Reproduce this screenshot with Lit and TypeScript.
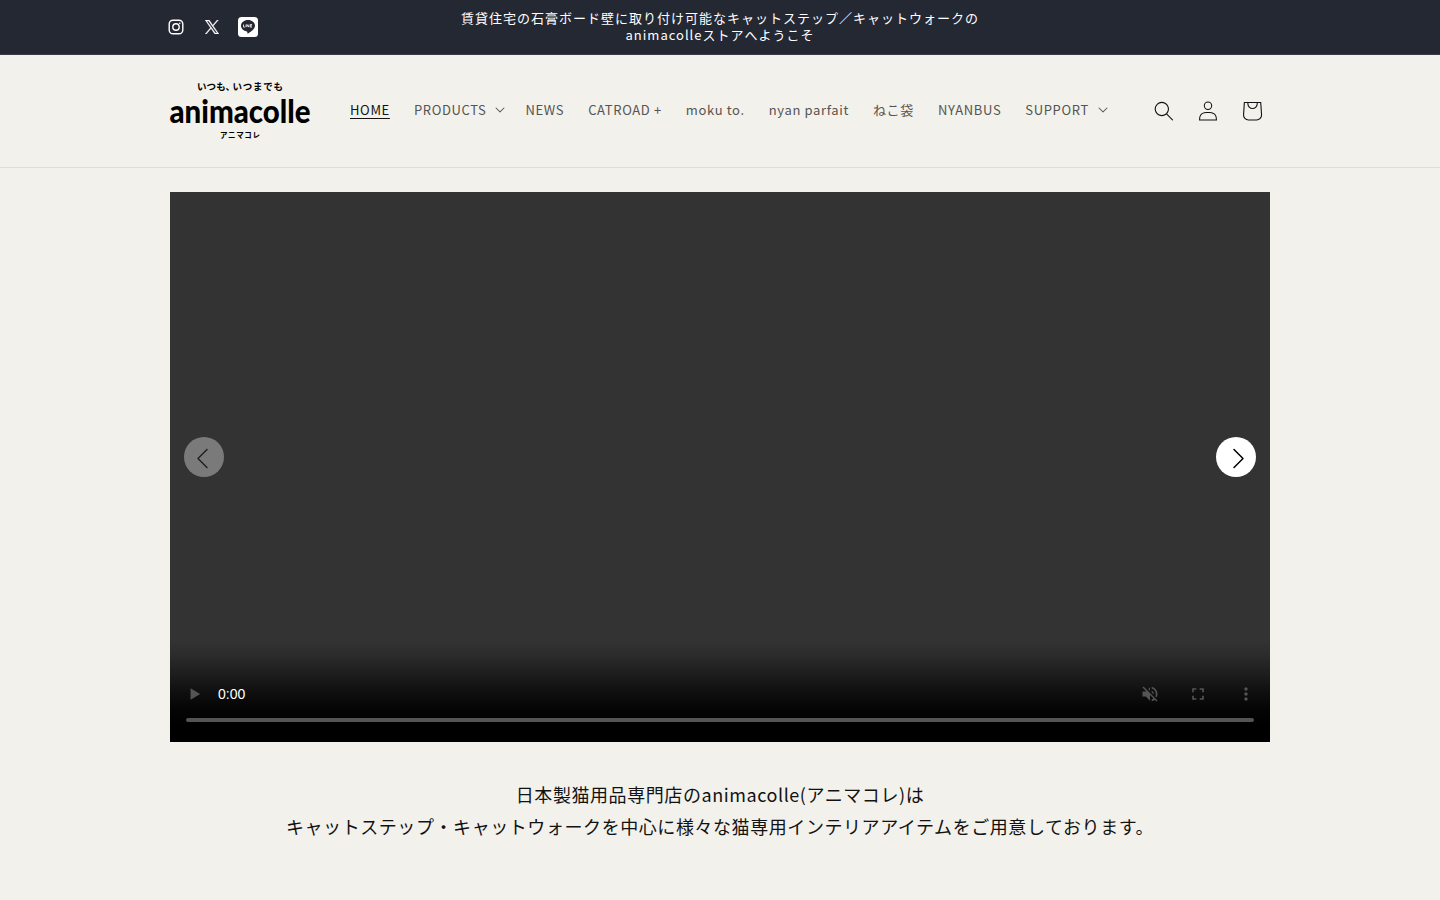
import { LitElement, html, css, svg } from "lit";
import { customElement } from "lit/decorators.js";

const caret = html`<svg class="caret" viewBox="0 0 10 6"><path fill="currentColor" d="M9.354.646a.5.5 0 00-.708 0L5 4.293 1.354.646a.5.5 0 00-.708.708l4 4a.5.5 0 00.708 0l4-4a.5.5 0 000-.708z"/></svg>`;

const menu = [
  { label: "HOME", active: true },
  { label: "PRODUCTS", sub: true },
  { label: "NEWS" },
  { label: "CATROAD +" },
  { label: "moku to." },
  { label: "nyan parfait" },
  { label: "ねこ袋" },
  { label: "NYANBUS" },
  { label: "SUPPORT", sub: true },
];

const arrow = svg`<path d="M1 1l9 9-9 9" fill="none" stroke="#000" stroke-width="1.5" stroke-linecap="round" stroke-linejoin="round"/>`;

@customElement("app-root")
export class AppRoot extends LitElement {
  static styles = css`
    :host { display: block; height: 900px; overflow: hidden; background: #f2f1ec; color: #121212; font-family: "Noto Sans CJK JP", sans-serif; }
    * { box-sizing: border-box; }
    svg { display: block; }
    .bar { background: #242833; color: #fff; height: 55px; padding: 0 154px; display: grid; grid-template-columns: 1fr 548px 1fr; align-items: center; border-bottom: 1px solid #393c46; }
    .social { display: flex; }
    .social span { width: 36px; height: 44px; display: flex; align-items: center; justify-content: center; padding-left: 8px; }
    .message { font-size: 13px; letter-spacing: 1px; line-height: 16.9px; text-align: center; margin: 0 0 1px; white-space: nowrap; }
    .header { height: 113px; padding: 0 166px 0 170px; display: flex; align-items: center; border-bottom: 1px solid #dfddd9; }
    .logo { width: 140px; height: 60px; flex: none; overflow: visible; }
    .nav { display: flex; margin: 0 0 2px 28px; flex: 1; }
    .item { display: flex; align-items: center; padding: 12px; font-size: 13px; letter-spacing: .64px; line-height: 20px; color: #555451; white-space: nowrap; }
    .item.active { color: #121212; }
    .item.active span { text-decoration: underline; text-underline-offset: 3px; text-decoration-thickness: 1px; }
    .item.sub { padding-right: 8px; }
    .caret { width: 10px; height: 6px; margin-left: 9px; }
    .tools { display: flex; }
    .tools span { width: 44px; height: 44px; display: flex; align-items: center; justify-content: center; }
    .tools .small { width: 20px; height: 20px; }
    .tools .cart { width: 44px; height: 44px; }
    .video { position: relative; margin: 24px auto 0; width: 1100px; height: 550px; background: #333; display: flex; flex-direction: column; justify-content: flex-end; }
    .controls { height: 102px; padding: 30px 16px 20px; background: linear-gradient(to bottom, rgba(0,0,0,0) 0%, rgba(0,0,0,.15) 15%, rgba(0,0,0,.46) 35%, rgba(0,0,0,.72) 52%, rgba(0,0,0,.91) 68%, #000 84%); }
    .row { display: flex; align-items: center; height: 48px; font: 14px/48px "Liberation Sans", sans-serif; color: #fff; }
    .row svg { width: 20px; height: 20px; fill: #545454; }
    .time { margin-left: 12px; flex: 1; }
    .buttons { display: flex; gap: 28px; margin-right: -2px; }
    .track { height: 4px; border-radius: 2px; background: #545454; }
    .circle { position: absolute; top: 245px; width: 40px; height: 40px; border-radius: 50%; background: #fff; display: flex; align-items: center; justify-content: center; }
    .circle svg { width: 11px; height: 20px; overflow: visible; }
    .prev { left: 14px; opacity: .35; }
    .prev svg { transform: translate(-2px, 1.5px) scaleX(-1); }
    .next { right: 14px; }
    .next svg { transform: translate(2px, 1.5px); }
    .intro { margin: 36px 0 0; font-size: 18px; line-height: 32.4px; letter-spacing: .57px; text-align: center; white-space: nowrap; }
  `;

  render() {
    return html`
      <div class="bar">
        <div class="social">
          <span><svg width="16" height="16" viewBox="0 0 16 16" fill="none" stroke="#fff" stroke-width="1.4"><rect x="1.2" y="1.2" width="13.6" height="13.6" rx="3.8"/><circle cx="8" cy="8" r="3.2"/><circle cx="11.8" cy="4.2" r=".8" fill="#fff" stroke="none"/></svg></span>
          <span><svg width="14" height="14" viewBox="0 0 1200 1227" fill="#fff" stroke="#fff" stroke-width="35"><path d="M714.163 519.284L1160.89 0H1055.03L667.137 450.887L357.328 0H0L468.492 681.821L0 1226.37H105.866L515.491 750.218L842.672 1226.37H1200L714.137 519.284H714.163ZM569.165 687.828L521.697 619.934L144.011 79.694H306.615L611.412 515.685L658.88 583.579L1055.08 1150.3H892.476L569.165 687.854V687.828Z"/></svg></span>
          <span><svg width="20" height="20" viewBox="0 0 20 20"><rect width="20" height="20" rx="3.5" fill="#fff"/><path fill="#242833" d="M10 3.1c-3.9 0-7 2.5-7 5.7 0 2.8 2.4 5.1 5.8 5.6.8.1.6.6.5 1.7 0 .5.2.6.7.3 1.9-1 7-4 7-7.6 0-3.200-3.100-5.700-7-5.700z"/><path d="M5.500 7.500v2.600h1.600M8 7.500v2.600M9 10.100V7.500l1.900 2.600V7.500M14 7.500h-1.700v2.600H14M12.300 8.800H14" fill="none" stroke="#fff" stroke-width=".8"/></svg></span>
        </div>
        <p class="message">賃貸住宅の石膏ボード壁に取り付け可能なキャットステップ／キャットウォークの<br>animacolleストアへようこそ</p>
      </div>
      <header class="header">
        <svg class="logo" viewBox="0 0 140 60" fill="#000">
          <text x="27" y="9" font-family="Noto Sans CJK JP" font-weight="700" font-size="9.500" textLength="38" lengthAdjust="spacing">いつも、</text>
          <text x="62.500" y="9" font-family="Noto Sans CJK JP" font-weight="700" font-size="9.500" textLength="50.500" lengthAdjust="spacing">いつまでも</text>
          <text x="-.5" y="41.500" font-family="Lato" font-weight="900" font-size="32" textLength="141" lengthAdjust="spacingAndGlyphs">animacolle</text>
          <text x="50" y="57" font-family="Noto Sans CJK JP" font-weight="700" font-size="7.500" textLength="40" lengthAdjust="spacing">アニマコレ</text>
        </svg>
        <nav class="nav">
          ${menu.map((m) => html`<div class="item ${m.active ? "active" : ""} ${m.sub ? "sub" : ""}"><span>${m.label}</span>${m.sub ? caret : ""}</div>`)}
        </nav>
        <div class="tools">
          <span><svg class="small" viewBox="0 0 18 19"><path fill="#121212" fill-rule="evenodd" d="M11.03 11.68A5.784 5.784 0 112.85 3.5a5.784 5.784 0 018.18 8.18zm.26 1.12a6.78 6.78 0 11.72-.7l5.4 5.4a.5.5 0 11-.71.7l-5.41-5.4z"/></svg></span>
          <span><svg class="small" viewBox="0 0 18 19"><path fill="#121212" fill-rule="evenodd" d="M6 4.500a3 3 0 116 0 3 3 0 01-6 0zm3-4a4 4 0 100 8 4 4 0 000-8zm5.580 12.150c1.120.820 1.830 2.240 1.910 4.850H1.510c.080-2.600.790-4.030 1.900-4.850C4.660 11.750 6.500 11.500 9 11.500s4.350.260 5.580 1.150zM9 10.500c-2.500 0-4.650.240-6.170 1.350C1.270 12.980.500 14.930.500 18v.500h17V18c0-3.070-.770-5.020-2.330-6.150-1.520-1.100-3.670-1.350-6.170-1.350z"/></svg></span>
          <span><svg class="cart" viewBox="0 0 40 40"><path fill="#121212" fill-rule="evenodd" d="M15.750 11.800h-3.160l-.770 11.600a5 5 0 004.990 5.340h7.380a5 5 0 004.990-5.330L28.400 11.800zm0 1h-2.220l-.710 10.670a4 4 0 003.990 4.270h7.380a4 4 0 004-4.270l-.720-10.670h-2.220v.630a4.750 4.750 0 11-9.500 0zm8.500 0h-7.500v.630a3.750 3.750 0 107.500 0z"/></svg></span>
        </div>
      </header>
      <section class="video">
        <div class="controls">
          <div class="row">
            <svg viewBox="0 0 24 24"><path d="M5.500 5v14l11.500-7z"/></svg>
            <span class="time">0:00</span>
            <div class="buttons">
              <svg viewBox="0 0 24 24"><path d="M16.500 12c0-1.770-1.020-3.290-2.500-4.030v2.210l2.450 2.450c.030-.200.050-.410.050-.630zm2.500 0c0 .940-.200 1.820-.540 2.640l1.510 1.510C20.630 14.910 21 13.500 21 12c0-4.280-2.990-7.860-7-8.770v2.060c2.890.860 5 3.540 5 6.710zM4.270 3L3 4.270 7.730 9H3v6h4l5 5v-6.730l4.250 4.250c-.670.520-1.420.930-2.250 1.180v2.060c1.380-.310 2.630-.950 3.690-1.810L19.730 21 21 19.730l-9-9L4.270 3zM12 4L9.910 6.090 12 8.180V4z"/></svg>
              <svg viewBox="0 0 24 24"><path d="M7 14H5v5h5v-2H7v-3zm-2-4h2V7h3V5H5v5zm12 7h-3v2h5v-5h-2v3zM14 5v2h3v3h2V5h-5z"/></svg>
              <svg viewBox="0 0 24 24"><path d="M12 8c1.100 0 2-.900 2-2s-.900-2-2-2-2 .900-2 2 .900 2 2 2zm0 2c-1.100 0-2 .900-2 2s.900 2 2 2 2-.900 2-2-.900-2-2-2zm0 6c-1.100 0-2 .900-2 2s.900 2 2 2 2-.900 2-2-.900-2-2-2z"/></svg>
            </div>
          </div>
          <div class="track"></div>
        </div>
        <div class="circle prev"><svg viewBox="0 0 11 20">${arrow}</svg></div>
        <div class="circle next"><svg viewBox="0 0 11 20">${arrow}</svg></div>
      </section>
      <p class="intro">日本製猫用品専門店のanimacolle(アニマコレ)は<br>キャットステップ・キャットウォークを中心に様々な猫専用インテリアアイテムをご用意しております。</p>
    `;
  }
}
